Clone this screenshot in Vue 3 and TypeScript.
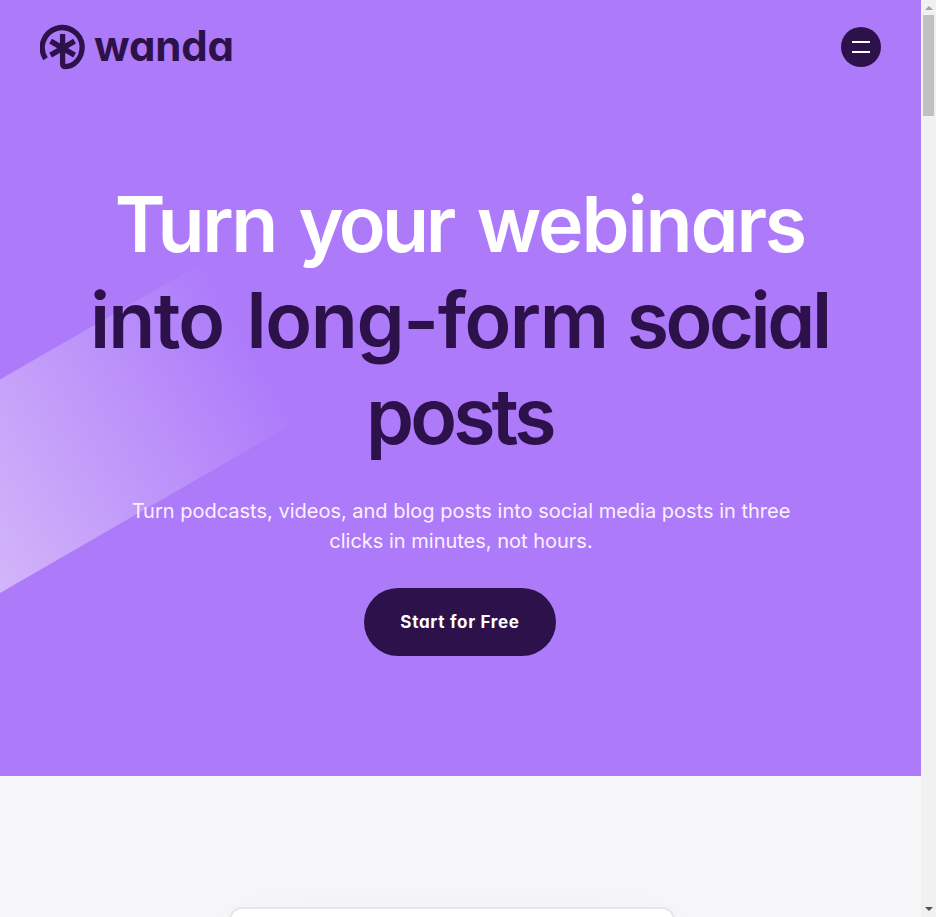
<script setup lang="ts">
interface Word {
  text: string
  cls: string
}

const headline: { tone: string; words: Word[] }[] = [
  {
    tone: 'light',
    words: [
      { text: 'Turn', cls: 'w-turn' },
      { text: 'your', cls: 'w-your' },
      { text: 'webinars', cls: 'w-webinars' },
    ],
  },
  {
    tone: 'dark',
    words: [
      { text: 'into', cls: 'w-into' },
      { text: 'long-form', cls: 'w-long' },
      { text: 'social', cls: 'w-social' },
    ],
  },
  { tone: 'dark', words: [{ text: 'posts', cls: 'w-posts' }] },
]
</script>

<template>
  <div class="window">
    <div class="page">
      <section class="hero">
        <svg class="beam" viewBox="0 0 330 360" aria-hidden="true">
          <defs>
            <linearGradient id="beam-fade" gradientUnits="userSpaceOnUse" x1="0" y1="343" x2="295" y2="173">
              <stop offset="0" stop-color="#fffaf8" stop-opacity=".46" />
              <stop offset="1" stop-color="#fffaf8" stop-opacity="0" />
            </linearGradient>
          </defs>
          <path d="M0 129.500L225 0H330V152.500L0 343Z" fill="url(#beam-fade)" />
        </svg>
        <header class="nav">
          <a class="brand">
            <svg class="mark" viewBox="0 0 46 46" fill="none" stroke="#2d114b" aria-hidden="true">
              <path d="M5.600 34.700A20 20 0 1 1 42.200 22.500C42.200 34.500 34 42.600 25.500 42.600Q22.600 42.600 22.600 39.500V10" stroke-width="5.300" />
              <path d="M10.600 17.100L34.600 31.100M34.600 17.100L10.600 31.100" stroke-width="5.400" />
            </svg>
            <span class="wordmark">wanda</span>
          </a>
          <button class="menu" aria-label="Menu"><i></i><i></i></button>
        </header>
        <h1>
          <span v-for="(line, i) in headline" :key="i" class="line" :class="line.tone">
            <template v-for="word in line.words" :key="word.text"><span :class="word.cls">{{ word.text }}</span>{{ ' ' }}</template>
          </span>
        </h1>
        <p>Turn podcasts, videos, and blog posts into social media posts in three<br />clicks in minutes, not hours.</p>
        <button class="cta">Start for Free</button>
      </section>
      <section class="preview"><div class="card"></div></section>
    </div>
    <div class="scrollbar">
      <i class="up"></i>
      <div class="thumb"></div>
      <i class="down"></i>
    </div>
  </div>
</template>

<style>
body {
  overflow: hidden;
}
</style>

<style scoped>
.window {
  display: flex;
  height: 917px;
  overflow: hidden;
  font-family: Inter, sans-serif;
}
.page {
  display: flex;
  flex-direction: column;
  width: 921px;
}
.hero {
  position: relative;
  box-sizing: border-box;
  height: 776px;
  background: #ad7bfa;
  display: flex;
  flex-direction: column;
  align-items: center;
}
.hero > * {
  flex: none;
}
.beam {
  position: absolute;
  left: 0;
  top: 250px;
  width: 330px;
  height: 360px;
}
.nav {
  position: relative;
  box-sizing: border-box;
  width: 100%;
  height: 94px;
  padding: 0 40px;
  display: flex;
  align-items: center;
  justify-content: space-between;
}
.brand {
  display: flex;
  align-items: center;
  gap: 8px;
}
.mark {
  width: 46px;
  height: 46px;
  flex: none;
}
.wordmark {
  margin-bottom: 3px;
  font-size: 42px;
  line-height: 46px;
  font-weight: 700;
  letter-spacing: -0.2px;
  color: #2d114b;
  font-feature-settings: 'cv11';
}
button {
  border: 0;
  padding: 0;
  font-family: inherit;
}
.menu {
  width: 40px;
  height: 40px;
  border-radius: 50%;
  background: #2d114b;
  display: flex;
  flex-direction: column;
  align-items: center;
  justify-content: center;
  gap: 8px;
}
.menu i {
  width: 18px;
  height: 2px;
  background: #fff;
}
h1 {
  position: relative;
  margin: 82px 0 0;
  font-size: 77px;
  line-height: 96px;
  font-weight: 600;
  text-align: center;
  font-feature-settings: 'cv11';
}
.line {
  display: block;
  padding-left: 1px;
  white-space: nowrap;
}
.light {
  color: #fff;
}
.dark {
  color: #2d114b;
}
.w-turn {
  letter-spacing: -2.4px;
  margin-right: 3.2px;
}
.w-your {
  letter-spacing: -3.6px;
  margin-right: 4.6px;
}
.w-webinars {
  letter-spacing: -2.1px;
  margin-right: 2.1px;
}
.w-into {
  letter-spacing: -1.8px;
  margin-right: 3.8px;
}
.w-long {
  letter-spacing: -1.4px;
  margin-right: -0.5px;
}
.w-social {
  letter-spacing: -3.4px;
  margin-right: 3.4px;
}
.w-posts {
  letter-spacing: -3.9px;
  margin-right: 3.3px;
}
p {
  position: relative;
  margin: 32px 0 0;
  padding-left: 1px;
  font-size: 20px;
  line-height: 30px;
  text-align: center;
  white-space: nowrap;
  color: #fbf1ff;
}
.cta {
  position: relative;
  left: -0.5px;
  width: 192px;
  height: 68px;
  margin-top: 32px;
  padding-bottom: 1px;
  border-radius: 34px;
  background: #2d114b;
  color: #fff;
  font-size: 17px;
  font-weight: 700;
  letter-spacing: 0.7px;
  font-feature-settings: 'cv11';
}
.preview {
  flex: 1;
  overflow: hidden;
  background: #f7f7f9;
}
.card {
  box-sizing: border-box;
  width: 446px;
  height: 400px;
  margin: 131px 0 0 229px;
  border: 2px solid #e6e6e9;
  border-radius: 13px;
  background: #fff;
  box-shadow: 0 20px 80px rgba(0, 0, 0, 0.05);
}
.scrollbar {
  box-sizing: border-box;
  width: 15px;
  height: 917px;
  padding: 6px 2px 6px;
  background: #f1f1f1;
  display: flex;
  flex-direction: column;
  align-items: center;
}
.up,
.down {
  border: solid transparent;
  border-width: 0 4px;
}
.up {
  border-bottom: 4px solid #a3a3a3;
}
.down {
  border-top: 4px solid #505050;
  margin-top: auto;
}
.thumb {
  width: 11px;
  height: 101px;
  margin-top: 5px;
  background: #c1c1c1;
}
</style>
